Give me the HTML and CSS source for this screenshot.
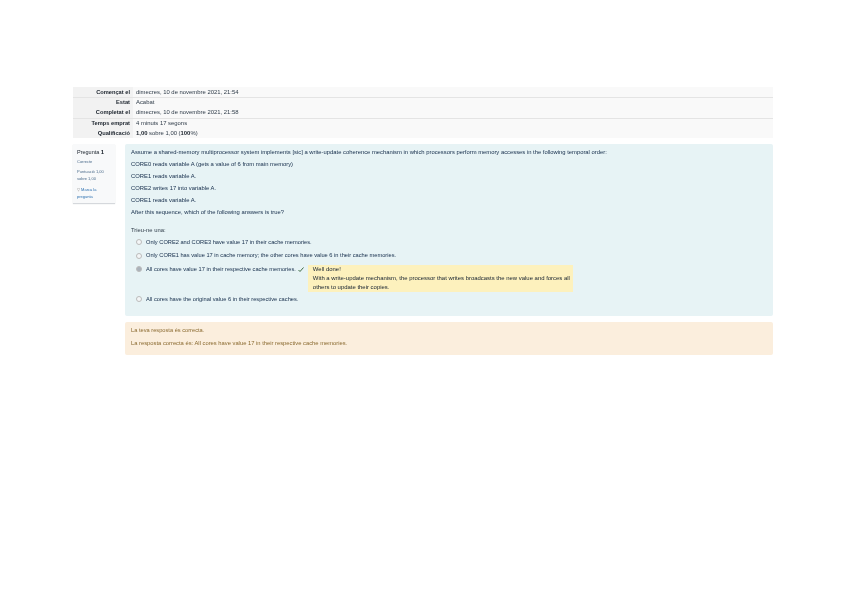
FILE: index.html
```html
<!DOCTYPE html>
<html lang="ca">
<head>
<meta charset="utf-8">
<title>Revisió</title>
<link rel="stylesheet" href="styles.css">
</head>
<body>
<main class="page">
  <div class="summary">
    <div class="row line"><div class="th">Començat el</div><div class="td">dimecres, 10 de novembre 2021, 21:54</div></div>
    <div class="row"><div class="th">Estat</div><div class="td">Acabat</div></div>
    <div class="row line"><div class="th">Completat el</div><div class="td">dimecres, 10 de novembre 2021, 21:58</div></div>
    <div class="row"><div class="th">Temps emprat</div><div class="td">4 minuts 17 segons</div></div>
    <div class="row"><div class="th">Qualificació</div><div class="td"><b>1,00</b> sobre 1,00 (<b>100</b>%)</div></div>
  </div>
  <div class="question">
    <aside class="info">
      <h3>Pregunta <b>1</b></h3>
      <p>Correcte</p>
      <p>Puntuació 1,00<br>sobre 1,00</p>
      <p class="flag"><span class="flagmark">▽</span> Marca la<br>pregunta</p>
    </aside>
    <div class="content">
      <section class="formulation">
        <p>Assume a shared-memory multiprocessor system implements [sic] a write-update coherence mechanism in which processors perform memory accesses in the following temporal order:</p>
        <p>CORE0 reads variable A (gets a value of 6 from main memory)</p>
        <p>CORE1 reads variable A.</p>
        <p>CORE2 writes 17 into variable A.</p>
        <p>CORE1 reads variable A.</p>
        <p>After this sequence, which of the following answers is true?</p>
        <p class="prompt">Trieu-ne una:</p>
        <div class="option"><span class="radio"></span><span>Only CORE2 and CORE3 have value 17 in their cache memories.</span></div>
        <div class="option"><span class="radio"></span><span>Only CORE1 has value 17 in cache memory; the other cores have value 6 in their cache memories.</span></div>
        <div class="option chosen"><span class="radio on"></span><span>All cores have value 17 in their respective cache memories.</span>
          <svg class="check" viewBox="0 0 6 5" width="6" height="5" aria-hidden="true"><path d="M0.5 3 L2 4.5 L5.5 0.5" fill="none" stroke="#3f6a45" stroke-width="1"/></svg>
          <div class="tip"><div>Well done!</div><div>With a write-update mechanism, the processor that writes broadcasts the new value and forces all</div><div>others to update their copies.</div></div>
        </div>
        <div class="option"><span class="radio"></span><span>All cores have the original value 6 in their respective caches.</span></div>
      </section>
      <section class="feedback">
        <p>La teva resposta és correcta.</p>
        <p>La resposta correcta és: All cores have value 17 in their respective cache memories.</p>
      </section>
    </div>
  </div>
</main>
</body>
</html>
```
FILE: styles.css
```css
html, body { margin: 0; padding: 0; background: #fff; }
body { font-family: "Liberation Sans", Arial, sans-serif; font-size: 5.9px; line-height: 10px; color: #1f2d3d; }
p { margin: 0; }
.page { width: 700px; padding: 87px 0 0 73px; filter: blur(0.3px); }
.summary { display: flex; flex-direction: column; }
.row { display: flex; height: 10.2px; background: #f9f9f9; }
.row.line { box-shadow: 0 1px 0 #e4e4e4; position: relative; }
.th { width: 57px; padding-right: 3px; background: #f2f2f2; text-align: right; font-size: 5.7px; font-weight: 700; color: #1a222c; }
.td { padding-left: 3px; color: #2e3b48; }
.td b { color: #1a222c; }
.question { display: flex; gap: 10px; margin-top: 6px; }
.info { box-sizing: border-box; width: 42px; height: 59px; padding: 3px 4px; background: #f8f9fa; box-shadow: 0 1px 1px #d5d8dc; font-size: 4px; line-height: 7.5px; color: #4a6a8a; }
.info h3 { margin: 0 0 1px; font-size: 5.5px; line-height: 10px; font-weight: 400; color: #1a222c; }
.info h3 b { font-size: 6px; }
.info p { margin-bottom: 2.5px; }
.flag { color: #2a6fb0; padding-top: 0.5px; }
.flagmark { color: #888; }
.content { flex: 1; display: flex; flex-direction: column; gap: 6px; }
.formulation { box-sizing: border-box; height: 172px; padding: 2.5px 6px; background: #e7f3f5; border-radius: 2px; font-size: 5.85px; line-height: 12px; color: #142c4a; }
.prompt { margin-top: 5.5px; color: #2e3b48; }
.option { display: flex; align-items: flex-start; padding-left: 4.5px; height: 13.5px; font-size: 5.7px; white-space: nowrap; }
.option.chosen { height: 30px; }
.radio { flex: none; width: 4px; height: 4px; margin: 3.5px 4.5px 0 0; border: 0.5px solid #bbb; border-radius: 50%; background: #f4f6f7; }
.radio.on { background: #aab2ba; }
.check { flex: none; margin: 4px 0 0 2px; }
.tip { margin: 2px 0 0 4px; width: 265px; padding: 0.5px 5px; box-sizing: border-box; background: #fdf1bd; font-size: 5.95px; line-height: 8.6px; color: #14202e; flex: none; }
.feedback { box-sizing: border-box; height: 33px; padding: 2px 6px; background: #fbeedd; border-radius: 2px; color: #8a6a30; font-size: 5.7px; line-height: 13px; }
.feedback p + p { font-size: 5.8px; }
```
